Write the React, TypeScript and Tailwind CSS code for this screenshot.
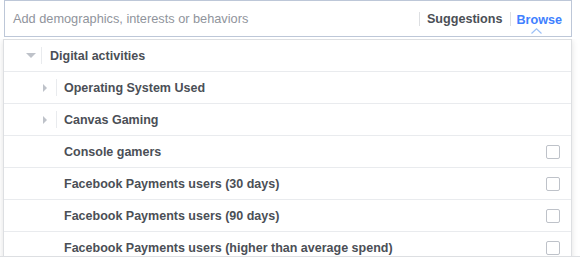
import React from 'react';

type Row = {
  label: string;
  kind: 'open' | 'closed' | 'leaf';
};

const rows: Row[] = [
  { label: 'Digital activities', kind: 'open' },
  { label: 'Operating System Used', kind: 'closed' },
  { label: 'Canvas Gaming', kind: 'closed' },
  { label: 'Console gamers', kind: 'leaf' },
  { label: 'Facebook Payments users (30 days)', kind: 'leaf' },
  { label: 'Facebook Payments users (90 days)', kind: 'leaf' },
  { label: 'Facebook Payments users (higher than average spend)', kind: 'leaf' },
];

const TreeRow: React.FC<{ row: Row }> = ({ row }) => {
  if (row.kind === 'open') {
    return (
      <div className="flex h-[32px] shrink-0 items-center border-b border-[#e9ebee]">
        <div className="flex w-[37px] justify-end pr-[5px]">
          <div className="h-0 w-0 border-x-[5px] border-t-[5px] border-x-transparent border-t-[#bec2c9]" />
        </div>
        <div className="h-[17px] w-px bg-[#e9ebee]" />
        <span className="ml-[8px] pt-px text-[12.5px] font-bold text-[#4b4f56]">{row.label}</span>
      </div>
    );
  }
  return (
    <div className="flex h-[32px] shrink-0 items-center border-b border-[#e9ebee]">
      <div className="flex w-[52px] justify-end pr-[9px]">
        {row.kind === 'closed' && (
          <div className="h-0 w-0 border-y-[4px] border-l-[4px] border-y-transparent border-l-[#bec2c9]" />
        )}
      </div>
      {row.kind === 'closed' ? <div className="h-[17px] w-px bg-[#e9ebee]" /> : <div className="w-px" />}
      <span className="ml-[7px] flex-1 pt-px text-[12.5px] font-bold text-[#4b4f56]">{row.label}</span>
      {row.kind === 'leaf' && (
        <div className="mr-[11px] h-[14px] w-[14px] rounded-[2px] border border-[#bec2c9] bg-white" />
      )}
    </div>
  );
};

export default function App() {
  return (
    <div className="relative h-[263px] w-[580px] overflow-hidden bg-white font-['Liberation_Sans',Arial,sans-serif]">
      <div className="ml-[4px] flex h-[37px] w-[568px] items-center border border-[#bdc7d8] pl-[8px] pt-px">
        <span className="flex-1 text-[12.75px] text-[#90949c]">Add demographics, interests or behaviors</span>
        <div className="h-[14px] w-px bg-[#dddfe2]" />
        <span className="px-[7px] text-[12.6px] font-bold text-[#4b4f56]">Suggestions</span>
        <div className="h-[14px] w-px bg-[#dddfe2]" />
        <div className="relative pl-[6px] pr-[9px]">
          <span className="text-[12.6px] font-bold text-[#4080ff]">Browse</span>
          <svg
            className="absolute left-[20px] top-[21px]"
            width="11"
            height="6"
            viewBox="0 0 11 6"
            fill="none"
          >
            <path d="M0.5 5.5 L5.5 0.8 L10.5 5.5" stroke="#9cc0f7" strokeWidth="1.2" />
          </svg>
        </div>
      </div>
      <div className="mt-[2px] h-[218px] overflow-hidden border-b border-[#dddfe2] pl-[3px] pr-[8px]">
        <div className="flex h-[240px] flex-col border border-[#dddfe2] bg-white shadow-[0_1px_6px_rgba(0,0,0,0.12)]">
          {rows.map((row) => (
            <TreeRow key={row.label} row={row} />
          ))}
        </div>
      </div>
    </div>
  );
}
